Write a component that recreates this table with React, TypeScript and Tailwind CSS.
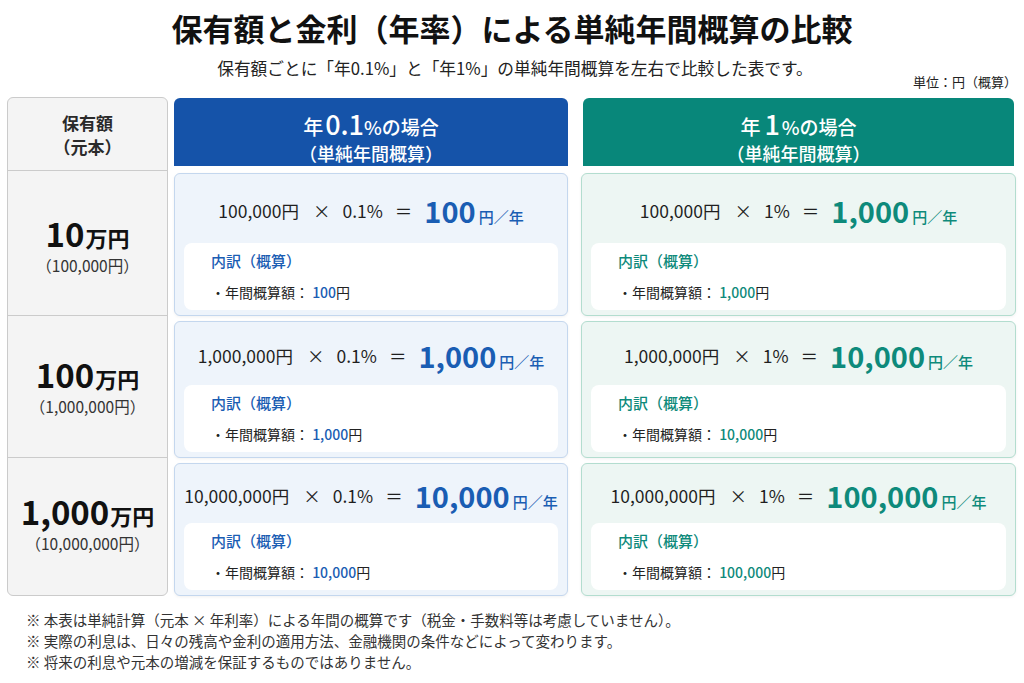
import React from "react";

type Row = {
  big: string;
  sub: string;
  principal: string;
  blue: string;
  teal: string;
  hLeft: string;
  hCard: string;
  mtCard: string;
  leftPad: string;
};

const rows: Row[] = [
  { big: "10", sub: "（100,000円）", principal: "100,000円", blue: "100", teal: "1,000", hLeft: "h-[145px]", hCard: "h-[143px]", mtCard: "mt-[7px]", leftPad: "pt-[6px]" },
  { big: "100", sub: "（1,000,000円）", principal: "1,000,000円", blue: "1,000", teal: "10,000", hLeft: "h-[142px]", hCard: "h-[137px]", mtCard: "mt-[5px]", leftPad: "pt-[0px]" },
  { big: "1,000", sub: "（10,000,000円）", principal: "10,000,000円", blue: "10,000", teal: "100,000", hLeft: "flex-1", hCard: "h-[133px]", mtCard: "mt-[5px]", leftPad: "pb-[6px]" },
];

function Card({
  principal,
  rate,
  result,
  tone,
  h,
  mt,
}: {
  principal: string;
  rate: string;
  result: string;
  tone: "blue" | "teal";
  h: string;
  mt: string;
}) {
  const isBlue = tone === "blue";
  const cardCls = isBlue
    ? "bg-[#eef4fb] border-[#c4d7ee]"
    : "bg-[#edf6f3] border-[#b3ddcf]";
  const accent = isBlue ? "text-[#1a5db3]" : "text-[#0e8a7b]";
  return (
    <div className={`${h} ${mt} flex flex-col rounded-[6px] border ${cardCls} shadow-[0_1px_3px_rgba(0,0,0,0.06)]`}>
      <div className="flex-1 flex items-center justify-center pt-[5px]">
        <div className="flex items-center text-[#1f1f1f] text-[17.5px] leading-[24px]">
          <span>{principal}</span>
          <span className="ml-[14px]">×</span>
          <span className="ml-[12px]">{rate}</span>
          <span className="ml-[12px]">＝</span>
          <span className="ml-[12px] flex items-baseline">
            <span className={`text-[29px] font-bold leading-[34px] ${accent}`}>{result}</span>
            <span className={`text-[15px] font-medium ml-[3px] ${accent}`}>円／年</span>
          </span>
        </div>
      </div>
      <div className="mx-[9px] mb-[5px] h-[67px] rounded-[8px] bg-white flex flex-col pl-[27px]">
        <div className={`mt-[8px] text-[15px] font-medium leading-[20px] ${accent}`}>内訳（概算）</div>
        <div className="mt-[11px] text-[14px] leading-[20px] text-[#222]">
          <span>・年間概算額： </span>
          <span className={`font-medium ${accent}`}>{result}</span>
          <span>円</span>
        </div>
      </div>
    </div>
  );
}

export default function App() {
  return (
    <div className="w-[1024px] h-[683px] bg-white overflow-hidden font-['Noto_Sans_CJK_JP','Noto_Sans',sans-serif] text-[#1f1f1f]">
      <div className="pt-[8px] text-center text-[31px] font-bold leading-[40px] text-[#111]">
        保有額と金利（年率）による単純年間概算の比較
      </div>
      <div className="mt-[8px] pl-[6px] text-center text-[16.7px] leading-[24px] text-[#222]">
        保有額ごとに「年0.1%」と「年1%」の単純年間概算を左右で比較した表です。
      </div>
      <div className="-mt-[7px] h-[18px] flex justify-end pr-[7px] text-[13px] leading-[18px] text-[#222]">
        単位：円（概算）
      </div>

      <div className="mt-[6px] flex px-[7px]">
        {/* left column */}
        <div className="w-[161px] h-[499px] flex flex-col rounded-[6px] border border-[#cbcbcb] bg-[#f4f4f4]">
          <div className="h-[73px] border-b border-[#cbcbcb] flex flex-col items-center justify-center pt-[2px] text-[17px] font-bold leading-[24px] text-[#2a2a2a]">
            <div>保有額</div>
            <div>（元本）</div>
          </div>
          {rows.map((r, i) => (
            <div
              key={r.big}
              className={`${r.hLeft} ${i < 2 ? "border-b border-[#cbcbcb]" : ""} ${r.leftPad} flex flex-col items-center justify-center`}
            >
              <div className="flex items-baseline font-bold text-[#111] leading-[34px]">
                <span className="text-[33px]">{r.big}</span>
                <span className="text-[22px] ml-[1px]">万円</span>
              </div>
              <div className="text-[15.5px] leading-[22px] text-[#333]">{r.sub}</div>
            </div>
          ))}
        </div>

        {/* blue column */}
        <div className="w-[394px] ml-[6px] flex flex-col">
          <div className="h-[68px] mt-[1px] rounded-t-[6px] bg-[#1553a9] text-white flex flex-col items-center justify-center pt-[10px]">
            <div className="flex items-baseline font-medium leading-[28px]">
              <span className="text-[20px]">年</span>
              <span className="text-[27px] ml-[2px]">0.1</span>
              <span className="text-[19px]">%の場合</span>
            </div>
            <div className="text-[18px] font-medium leading-[24px]">（単純年間概算）</div>
          </div>
          {rows.map((r) => (
            <Card key={r.big} principal={r.principal} rate="0.1%" result={r.blue} tone="blue" h={r.hCard} mt={r.mtCard} />
          ))}
        </div>

        {/* teal column */}
        <div className="w-[435px] ml-[13px] flex flex-col">
          <div className="h-[68px] mt-[1px] mx-[2px] rounded-t-[6px] bg-[#08877a] text-white flex flex-col items-center justify-center pt-[10px]">
            <div className="flex items-baseline font-medium leading-[28px]">
              <span className="text-[20px]">年</span>
              <span className="text-[27px] ml-[4px]">1</span>
              <span className="text-[19px] ml-[2px]">%の場合</span>
            </div>
            <div className="text-[18px] font-medium leading-[24px]">（単純年間概算）</div>
          </div>
          {rows.map((r) => (
            <Card key={r.big} principal={r.principal} rate="1%" result={r.teal} tone="teal" h={r.hCard} mt={r.mtCard} />
          ))}
        </div>
      </div>

      <div className="mt-[13px] pl-[26px] text-[14.5px] leading-[21px] text-[#333]">
        <div>※ 本表は単純計算（元本 × 年利率）による年間の概算です（税金・手数料等は考慮していません）。</div>
        <div>※ 実際の利息は、日々の残高や金利の適用方法、金融機関の条件などによって変わります。</div>
        <div>※ 将来の利息や元本の増減を保証するものではありません。</div>
      </div>
    </div>
  );
}
